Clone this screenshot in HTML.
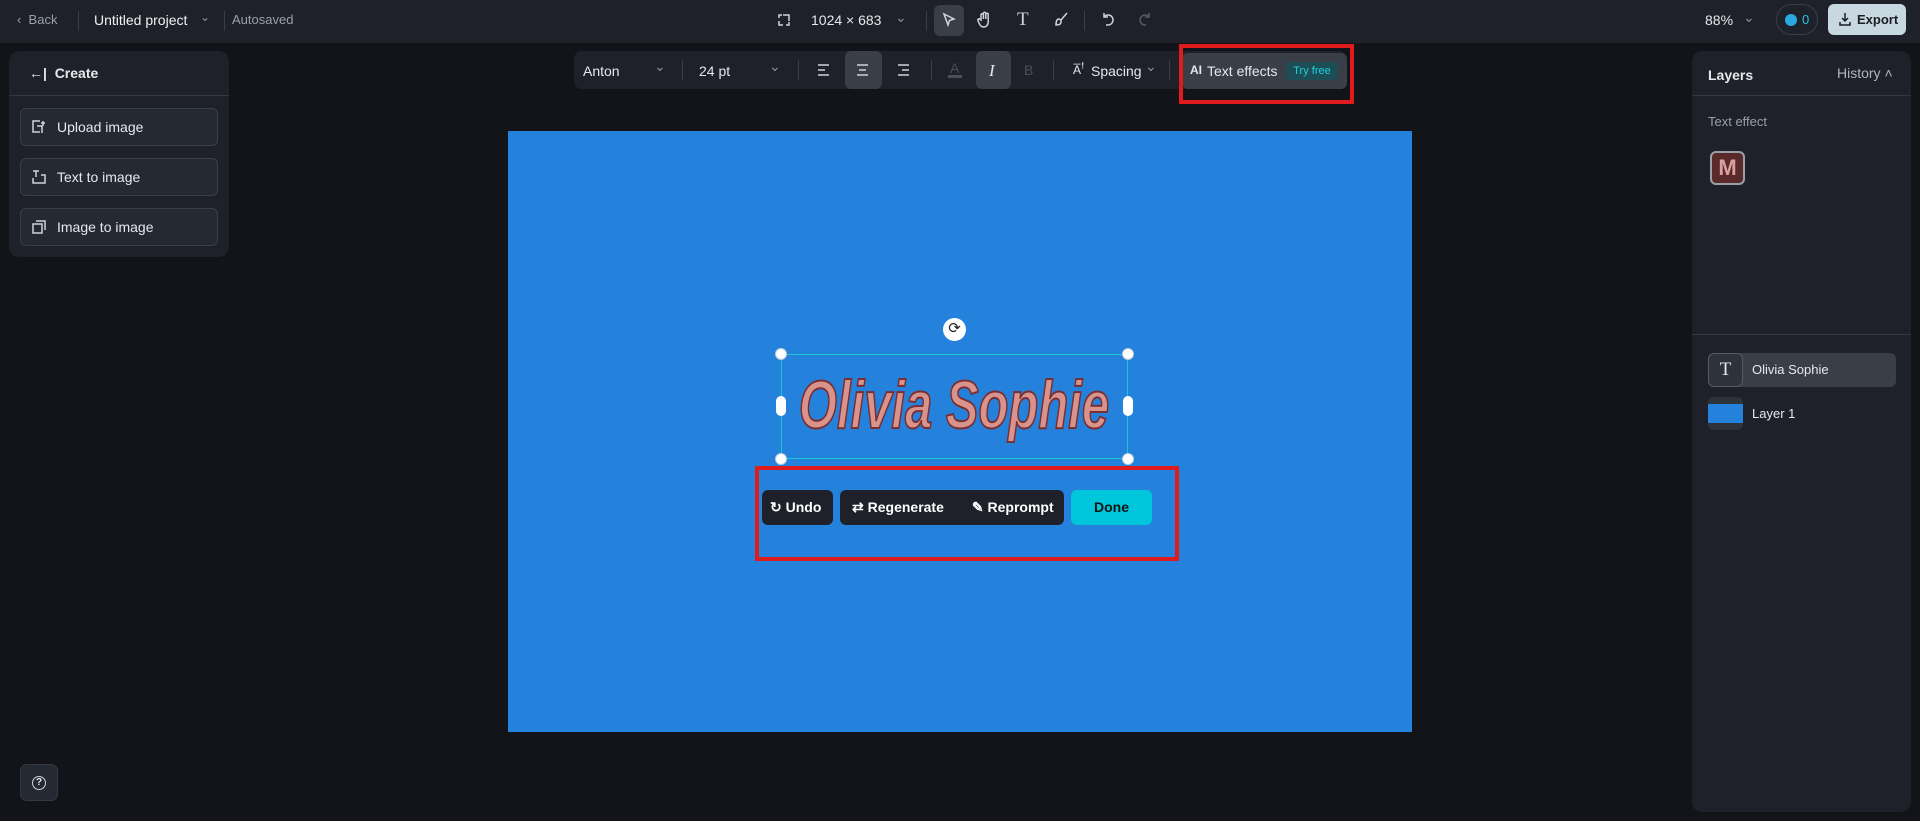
<!DOCTYPE html>
<html><head><meta charset="utf-8"><style>
*{box-sizing:border-box;margin:0;padding:0}
body{width:1920px;height:821px;background:#131419;font-family:"Liberation Sans",sans-serif;color:#e6e8ec;position:relative;overflow:hidden;font-size:14px}
.a{position:absolute}
.top{left:0;top:0;width:1920px;height:43px;background:#1e2129}
.sep{width:1px;height:20px;background:#3a3e47}
.panel{background:#1e2129;border-radius:10px}
.btn{position:absolute;left:20px;width:198px;height:38px;border:1px solid #3a3e47;border-radius:6px;background:#252932;font-size:14px;display:flex;align-items:center;padding-left:36px;color:#e6e8ec}
.ic{stroke:#d0d3d9;fill:none;stroke-width:1.5}
.tb{font-size:14px;color:#e6e8ec}
.dark{background:#1e2129;border-radius:6px;color:#fff;font-weight:bold;font-size:14px;display:flex;align-items:center}
.h{width:12px;height:12px;border-radius:50%;background:#fff;border:1px solid #bcd}
</style></head><body>
<div class="a top"></div>
<div class="a" style="left:17px;top:12px;color:#9aa0a8;font-size:13px">‹&nbsp; Back</div>
<div class="a sep" style="left:78px;top:11px"></div>
<div class="a" style="left:94px;top:12px;font-size:14px;color:#f0f2f5">Untitled project</div>
<div class="a" style="left:200px;top:10px;color:#8a9099;font-size:12px">⌄</div>
<div class="a sep" style="left:224px;top:11px"></div>
<div class="a" style="left:232px;top:12px;color:#9aa0a8;font-size:13px">Autosaved</div>
<svg class="a" style="left:776px;top:12px" width="16" height="16" viewBox="0 0 16 16"><path class="ic" d="M3 6V3h3M13 10v3h-3M7 3h6v6M3 9v4h4"/></svg>
<div class="a" style="left:811px;top:12px;font-size:14px">1024 × 683</div>
<div class="a" style="left:895px;top:9px;color:#8a9099">⌄</div>
<div class="a sep" style="left:926px;top:11px"></div>
<div class="a" style="left:934px;top:5px;width:30px;height:31px;background:#3a3e47;border-radius:6px"></div>
<svg class="a" style="left:941px;top:12px" width="16" height="16" viewBox="0 0 16 16"><path class="ic" d="M3 2l10 5-4.5 1.5L7 13z"/></svg>
<svg class="a" style="left:976px;top:11px" width="16" height="18" viewBox="0 0 16 18"><path class="ic" d="M5 9V4a1.2 1.2 0 012.4 0v4V2.5a1.2 1.2 0 012.4 0V8V3.5a1.2 1.2 0 012.4 0V11c0 3-2 5-4.5 5S4 14.5 3 12L2 9.5a1.2 1.2 0 012.2-1z"/></svg>
<div class="a" style="left:1017px;top:9px;font-size:19px;font-family:'Liberation Serif';color:#d0d3d9">T</div>
<svg class="a" style="left:1053px;top:11px" width="16" height="16" viewBox="0 0 16 16"><path class="ic" d="M14 2L8 9M8 9l-2-1c-2 0-3 2-3 6 3 0 5-1 5-3z"/></svg>
<div class="a sep" style="left:1084px;top:11px"></div>
<svg class="a" style="left:1100px;top:11px" width="16" height="16" viewBox="0 0 16 16"><path class="ic" d="M4 2v4h4M4 6a5 5 0 114 8H6"/></svg>
<svg class="a" style="left:1137px;top:11px" width="16" height="16" viewBox="0 0 16 16"><path class="ic" style="stroke:#555a63" d="M12 2v4H8M12 6a5 5 0 10-3 8"/></svg>
<div class="a" style="left:1705px;top:12px;font-size:14px">88%</div>
<div class="a" style="left:1743px;top:9px;color:#8a9099">⌄</div>
<div class="a" style="left:1776px;top:4px;width:42px;height:31px;border:1px solid #3a3e47;border-radius:16px"></div>
<div class="a" style="left:1785px;top:14px;width:12px;height:12px;border-radius:50%;background:#29a9e0"></div>
<div class="a" style="left:1802px;top:12px;color:#29c3e0;font-size:13px">0</div>
<div class="a" style="left:1828px;top:4px;width:78px;height:31px;background:#c8d8e0;border-radius:6px;color:#1a1d23;font-weight:bold;font-size:13px;padding:8px 0 0 29px">Export</div>
<svg class="a" style="left:1838px;top:12px" width="14" height="14" viewBox="0 0 14 14"><path d="M7 1v8M4 6l3 3 3-3M2 10v3h10v-3" stroke="#1a1d23" fill="none" stroke-width="1.5"/></svg>

<div class="a panel" style="left:9px;top:51px;width:220px;height:206px"></div>
<div class="a" style="left:29px;top:65px;font-size:14px;font-weight:bold">←|&nbsp; Create</div>
<div class="a" style="left:9px;top:95px;width:220px;height:1px;background:#343842"></div>
<div class="btn" style="top:108px">Upload image</div>
<div class="btn" style="top:158px">Text to image</div>
<div class="btn" style="top:208px">Image to image</div>
<svg class="a" style="left:32px;top:120px" width="14" height="14" viewBox="0 0 14 14"><path class="ic" d="M8 1H1v11h7M5 6h5v7M11 1v5M9 3h4"/></svg>
<svg class="a" style="left:32px;top:170px" width="14" height="14" viewBox="0 0 14 14"><path class="ic" d="M1 1h6M4 1v6M1 8v5h12V5h-4"/></svg>
<svg class="a" style="left:32px;top:220px" width="14" height="14" viewBox="0 0 14 14"><path class="ic" d="M4 1h9v9M1 4h9v9H1z"/></svg>
<div class="a" style="left:20px;top:764px;width:38px;height:37px;background:#252932;border:1px solid #343842;border-radius:7px"></div>
<div class="a" style="left:32px;top:776px;width:14px;height:14px;border:1.5px solid #d0d3d9;border-radius:50%;font-size:10px;text-align:center;line-height:11px;font-weight:bold">?</div>

<div class="a panel" style="left:574px;top:51px;width:773px;height:38px;border-radius:8px"></div>
<div class="a tb" style="left:583px;top:63px">Anton</div>
<div class="a" style="left:654px;top:58px;color:#8a9099">⌄</div>
<div class="a sep" style="left:682px;top:60px"></div>
<div class="a tb" style="left:699px;top:63px">24 pt</div>
<div class="a" style="left:769px;top:58px;color:#8a9099">⌄</div>
<div class="a sep" style="left:798px;top:60px"></div>
<div class="a" style="left:845px;top:51px;width:37px;height:38px;background:#3a3e47;border-radius:6px"></div>
<svg class="a" style="left:817px;top:63px" width="100" height="14" viewBox="0 0 100 14"><path class="ic" d="M1 2h11M1 7h7M1 12h11M40 2h11M42 7h7M40 12h11M81 2h11M85 7h7M81 12h11"/></svg>
<div class="a sep" style="left:931px;top:60px"></div>
<div class="a" style="left:950px;top:60px;color:#4a4e57;font-size:14px">A</div>
<div class="a" style="left:948px;top:75px;width:14px;height:3px;background:#4a4e57"></div>
<div class="a" style="left:976px;top:51px;width:35px;height:38px;background:#3a3e47;border-radius:6px"></div>
<div class="a" style="left:989px;top:61px;font-style:italic;font-family:'Liberation Serif';font-size:17px">I</div>
<div class="a" style="left:1024px;top:62px;color:#4a4e57;font-size:14px">B</div>
<div class="a sep" style="left:1053px;top:60px"></div>
<div class="a tb" style="left:1073px;top:63px;font-size:12px">A̅ꜝ</div>
<div class="a tb" style="left:1091px;top:63px">Spacing</div>
<div class="a" style="left:1145px;top:58px;color:#8a9099">⌄</div>
<div class="a sep" style="left:1169px;top:60px"></div>
<div class="a" style="left:1182px;top:53px;width:165px;height:36px;background:#3a3e47;border-radius:6px"></div>
<div class="a tb" style="left:1190px;top:63px;font-size:12px;font-weight:bold">AI</div>
<div class="a tb" style="left:1207px;top:63px">Text effects</div>
<div class="a" style="left:1286px;top:62px;width:52px;height:18px;background:#1d4e55;border-radius:4px;color:#1fd0e0;font-size:11px;text-align:center;line-height:18px">Try free</div>
<div class="a" style="left:1179px;top:44px;width:175px;height:60px;border:4px solid #e01b1b"></div>

<div class="a" style="left:508px;top:131px;width:904px;height:601px;background:#2582dc"></div>
<div class="a" style="left:943px;top:318px;width:23px;height:23px;border-radius:50%;background:#fff;color:#222;text-align:center;line-height:22px;font-size:15px">⟳</div>
<div class="a" style="left:781px;top:354px;width:347px;height:105px;border:1.5px solid #19c8d0"></div>
<div class="a h" style="left:775px;top:348px"></div><div class="a h" style="left:1122px;top:348px"></div>
<div class="a h" style="left:775px;top:453px"></div><div class="a h" style="left:1122px;top:453px"></div>
<div class="a" style="left:776px;top:396px;width:10px;height:20px;border-radius:5px;background:#fff"></div>
<div class="a" style="left:1123px;top:396px;width:10px;height:20px;border-radius:5px;background:#fff"></div>
<div class="a" style="left:954px;top:368px;white-space:nowrap;transform:translateX(-50%) scaleX(.72);font-weight:bold;font-style:italic;font-size:68px;line-height:74px;color:#d8938c;-webkit-text-stroke:2px #7a2e30">Olivia Sophie</div>
<div class="a" style="left:755px;top:466px;width:424px;height:95px;border:4px solid #e01b1b"></div>
<div class="a dark" style="left:762px;top:490px;width:71px;height:35px;padding-left:8px">↻&nbsp;Undo</div>
<div class="a dark" style="left:840px;top:490px;width:224px;height:35px;padding-left:12px">⇄&nbsp;Regenerate<span style="margin-left:28px">✎&nbsp;Reprompt</span></div>
<div class="a" style="left:1071px;top:490px;width:81px;height:35px;background:#00c6dc;border-radius:6px;color:#111;font-weight:bold;font-size:14px;text-align:center;line-height:35px">Done</div>

<div class="a panel" style="left:1692px;top:51px;width:219px;height:761px"></div>
<div class="a" style="left:1708px;top:67px;font-weight:bold;font-size:14px">Layers</div>
<div class="a" style="left:1837px;top:65px;color:#b0b5bd;font-size:14px">History ˄</div>
<div class="a" style="left:1692px;top:95px;width:219px;height:1px;background:#343842"></div>
<div class="a" style="left:1708px;top:114px;color:#9aa0a8;font-size:13px">Text effect</div>
<div class="a" style="left:1710px;top:151px;width:35px;height:34px;border:2px solid #9aa0a8;border-radius:6px;background:#5a2a2a;color:#d8a0a0;font-weight:bold;font-size:22px;text-align:center;line-height:30px">M</div>
<div class="a" style="left:1692px;top:334px;width:219px;height:1px;background:#343842"></div>
<div class="a" style="left:1708px;top:353px;width:188px;height:34px;background:#3a3e47;border-radius:6px"></div>
<div class="a" style="left:1708px;top:353px;width:35px;height:34px;border:1px solid #555a63;border-radius:6px;background:#2e323a;text-align:center;line-height:32px;font-family:'Liberation Serif';font-size:19px">T</div>
<div class="a" style="left:1752px;top:362px;font-size:13px">Olivia Sophie</div>
<div class="a" style="left:1708px;top:397px;width:35px;height:33px;border-radius:6px;background:#2e323a;overflow:hidden"><div style="margin-top:7px;height:19px;background:#2582dc"></div></div>
<div class="a" style="left:1752px;top:406px;font-size:13px">Layer 1</div>
</body></html>
